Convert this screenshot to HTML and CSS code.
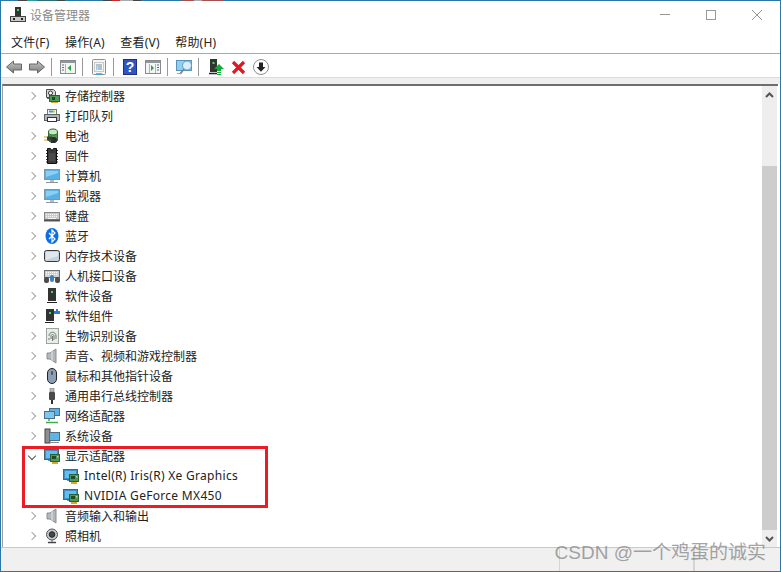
FILE: index.html
```html
<!DOCTYPE html>
<html lang="zh-CN">
<head>
  <meta charset="UTF-8" />
  <title>设备管理器</title>
  <link rel="stylesheet" href="styles.css">
</head>
<body>
  <svg class="defs" width="0" height="0">
    <defs>
      <linearGradient id="steel" x1="0" y1="0" x2="0" y2="1">
        <stop offset="0" stop-color="#c4c4c4"/>
        <stop offset="1" stop-color="#7d7d7d"/>
      </linearGradient>
      <symbol id="chip" viewBox="0 0 16 16">
        <rect x="6.500" y="6.500" width="9" height="7" fill="#4c9a58" stroke="#2b5f35"/>
        <rect x="8" y="8" width="4" height="3" fill="#20492a"/>
        <rect x="13" y="8" width="1.500" height="1.500" fill="#a7d8ae"/>
        <path d="M8 15h6" stroke="#e0a52c" stroke-width="2"/>
      </symbol>
      <symbol id="screen" viewBox="0 0 16 16">
        <rect x=".5" y="1.500" width="14" height="10" fill="#3d8fc6" stroke="#52636f"/>
        <rect x="2" y="3" width="11" height="7" fill="#63bdf0"/>
        <path d="M4 12.500h4" stroke="#7e8c96"/>
      </symbol>
      <symbol id="i-storage" viewBox="0 0 16 16">
        <path d="M2.500 1.500h7l2 2v6h-9z" fill="#d8d8d8" stroke="#4f4f4f"/>
        <circle cx="6.500" cy="5" r="2" fill="#fff" stroke="#333"/>
        <path d="M3 10.500h5" stroke="#666"/>
        <rect x="5.500" y="7.500" width="10" height="6" fill="#4c9a58" stroke="#2b5f35"/>
        <rect x="8" y="9" width="3" height="3" fill="#20492a"/>
        <path d="M7 14.500h7" stroke="#e0a52c"/>
      </symbol>
      <symbol id="i-printer" viewBox="0 0 16 16">
        <rect x="3.500" y="1.500" width="9" height="5" fill="#f4f4f4" stroke="#777"/>
        <path d="M5 3.500h2" stroke="#2f9ee0" stroke-width="2"/>
        <path d="M7 3.500h2" stroke="#3fb46a" stroke-width="2"/>
        <path d="M9 3.500h2" stroke="#e0c23c" stroke-width="2"/>
        <rect x=".5" y="6.500" width="15" height="6" fill="#aeb4b9" stroke="#5e6266"/>
        <rect x="3.500" y="9.500" width="9" height="4" fill="#fff" stroke="#333"/>
      </symbol>
      <symbol id="i-battery" viewBox="0 0 16 16">
        <path d="M4.500 4v8c0 3 9 3 9 0V4z" fill="#4e9f4a" stroke="#2b6a30"/>
        <ellipse cx="9" cy="4" rx="4.500" ry="3" fill="#c9e7c0" stroke="#2b6a30"/>
        <path d="M6 9h4a3 3 0 0 1 0 6H7" fill="#2d2d2d"/>
        <path d="M3 8.500h5v4H3z" fill="#3a3a3a"/>
        <path d="M0 9h3M0 12h3" stroke="#d8a22b"/>
      </symbol>
      <symbol id="i-firmware" viewBox="0 0 16 16">
        <path d="M3.500 .5h3a1.500 1.500 0 0 0 3 0h3v15h-9z" fill="#3a3a3a" stroke="#111"/>
        <path d="M2 2.500h1M2 5.500h1M2 8.500h1M2 11.500h1M2 14h1M13 2.500h1M13 5.500h1M13 8.500h1M13 11.500h1M13 14h1" stroke="#333"/>
        <path d="M5 5h6v8H5z" fill="#4c4c4c"/>
      </symbol>
      <symbol id="i-monitor" viewBox="0 0 16 16">
        <rect x=".5" y="1.500" width="15" height="10" fill="#58b0e6" stroke="#7d97a8"/>
        <path d="M2 3h12v2L2 9z" fill="#8ad0f5"/>
        <path d="M6 12h4v2H6z" fill="#b4bcc2"/>
        <path d="M2 14.500h12" stroke="#8b959c"/>
      </symbol>
      <symbol id="i-keyboard" viewBox="0 0 16 16">
        <rect x=".5" y="4.500" width="15" height="7" fill="#c9cbcd" stroke="#85888b"/>
        <path d="M2 6.500h12M2 8.500h12" stroke="#f7f7f7" stroke-dasharray="1 1"/>
        <path d="M4 10.500h8" stroke="#f7f7f7"/>
        <path d="M0 12.500h16" stroke="#555" stroke-width="2"/>
      </symbol>
      <symbol id="i-bluetooth" viewBox="0 0 16 16">
        <ellipse cx="8" cy="8" rx="6.500" ry="8" fill="#0a6fe0"/>
        <path d="M5 5l6 6-3 3V2l3 3-6 6" fill="none" stroke="#fff" stroke-width="1.200"/>
      </symbol>
      <symbol id="i-memory" viewBox="0 0 16 16">
        <rect x=".5" y="2.500" width="15" height="11" rx="2" fill="#c3d2dd" stroke="#3a3a3a"/>
        <path d="M2 4h12v4L2 12z" fill="#dfe8ee"/>
      </symbol>
      <symbol id="i-hid" viewBox="0 0 16 16">
        <rect x=".5" y="2.500" width="15" height="7" fill="#cdd0d2" stroke="#6c6f72"/>
        <path d="M2 4.500h12M2 6.500h12" stroke="#fff" stroke-dasharray="1 1"/>
        <rect x="0" y="9" width="5" height="6" rx="2" fill="#4c4c4c"/>
        <rect x="11" y="9" width="5" height="6" rx="2" fill="#4c4c4c"/>
        <rect x="6" y="7" width="4" height="7" rx="2" fill="#3e7fc0"/>
      </symbol>
      <symbol id="i-softdev" viewBox="0 0 16 16">
        <rect x="4" y="0" width="8" height="13" fill="#333"/>
        <rect x="7" y="3" width="2" height="2" fill="#3be04c"/>
        <path d="M3 14.500h10" stroke="#222"/>
      </symbol>
      <symbol id="i-softcomp" viewBox="0 0 16 16">
        <rect x="2" y="1" width="8" height="12" fill="#333"/>
        <rect x="5" y="4" width="2" height="2" fill="#3be04c"/>
        <path d="M1 14.500h9" stroke="#222"/>
        <path d="M10 3h2V1h2v2h2v3h-6z" fill="#2c7fd0"/>
      </symbol>
      <symbol id="i-bio" viewBox="0 0 16 16">
        <rect x="2.500" y=".5" width="12" height="15" fill="#e6eee8" stroke="#9aa5a0"/>
        <path d="M5 8c0-5 7-5 7 0v3M7 11V8c0-2 3-2 3 0v4M8.500 8v5M5 10v2" fill="none" stroke="#777"/>
      </symbol>
      <symbol id="i-sound" viewBox="0 0 16 16">
        <path d="M3 5h3l6-4v14l-6-4H3z" fill="#b4b8bb" stroke="#8a8e91"/>
        <path d="M8 3v10" stroke="#e4e6e8"/>
      </symbol>
      <symbol id="i-mouse" viewBox="0 0 16 16">
        <rect x="3.500" y=".5" width="9" height="15" rx="4.500" fill="#8ba0b5" stroke="#222"/>
        <rect x="7" y="3" width="2" height="4" rx="1" fill="#49586a"/>
      </symbol>
      <symbol id="i-usb" viewBox="0 0 16 16">
        <rect x="6" y="0" width="4" height="4" fill="#bbb" stroke="#666" stroke-width=".5"/>
        <rect x="5" y="4" width="6" height="8" rx="1" fill="#4a4a4a"/>
        <path d="M8 12v4" stroke="#333" stroke-width="2"/>
      </symbol>
      <symbol id="i-net" viewBox="0 0 16 16">
        <rect x="5.500" y=".5" width="10" height="7" fill="#5fb0e2" stroke="#4b6f88"/>
        <rect x=".5" y="3.500" width="10" height="7" fill="#7cc6f0" stroke="#4b6f88"/>
        <path d="M5 11v2M2 14.500h12" stroke="#3fae4a" stroke-width="1.500"/>
      </symbol>
      <symbol id="i-system" viewBox="0 0 16 16">
        <rect x="1" y="1" width="5" height="14" fill="#8d8f91" stroke="#444"/>
        <rect x="5.500" y="4.500" width="10" height="8" fill="#5eb4e6" stroke="#546b7c"/>
        <path d="M7 14.500h8" stroke="#7e8c96"/>
      </symbol>
      <symbol id="i-display" viewBox="0 0 16 16">
        <use href="#screen"/>
        <use href="#chip"/>
      </symbol>
      <symbol id="i-camera" viewBox="0 0 16 16">
        <circle cx="8" cy="6.500" r="5.500" fill="#c6c8ca" stroke="#555"/>
        <circle cx="8" cy="6.500" r="2.800" fill="#3e4a52" stroke="#222"/>
        <path d="M4 14.500h8" stroke="#444" stroke-width="1.500"/>
        <path d="M8 12v2" stroke="#666"/>
      </symbol>
    </defs>
  </svg>

  <div class="window">
    <div class="edge"></div>

    <div class="titlebar">
      <svg class="app-icon" width="16" height="16" viewBox="0 0 16 16">
        <rect x="5" y="0" width="6" height="9" fill="#333"/>
        <rect x="7" y="2" width="2" height="2" fill="#3be04c"/>
        <rect x=".5" y="9.500" width="15" height="5" fill="#c9c9c9" stroke="#444"/>
        <path d="M3 12h2M11 12h2" stroke="#222" stroke-width="2"/>
      </svg>
      <span class="title">设备管理器</span>
      <div class="caption">
        <svg width="12" height="12" viewBox="0 0 12 12"><path d="M1 5.500h10" stroke="#999"/></svg>
        <svg width="12" height="12" viewBox="0 0 12 12"><rect x="1.500" y="1.500" width="9" height="9" fill="none" stroke="#999"/></svg>
        <svg width="12" height="12" viewBox="0 0 12 12"><path d="M1 1l10 10M11 1L1 11" stroke="#999"/></svg>
      </div>
    </div>

    <div class="menubar">
      <span>文件(F)</span>
      <span>操作(A)</span>
      <span>查看(V)</span>
      <span>帮助(H)</span>
    </div>

    <div class="toolbar">
      <svg class="tool" width="16" height="16" viewBox="0 0 16 16"><path d="M7.500 2L.5 8l7 6v-3h8V5h-8z" fill="url(#steel)" stroke="#666"/></svg>
      <svg class="tool next" width="16" height="16" viewBox="0 0 16 16"><path d="M8.500 2l7 6-7 6v-3h-8V5h8z" fill="url(#steel)" stroke="#666"/></svg>
      <i class="sep"></i>
      <svg class="tool" width="16" height="16" viewBox="0 0 16 16"><rect x=".5" y="1.500" width="15" height="13" fill="#f4f4f4" stroke="#8a8a8a"/><path d="M1 3h14" stroke="#8e979e" stroke-width="2"/><path d="M2 6h2M2 8.500h2M2 11h2" stroke="#4d6f92"/><path d="M5.500 5v9" stroke="#a9b4bd"/><path d="M11 6v6L7.500 9z" fill="#23a83f"/></svg>
      <i class="sep"></i>
      <svg class="tool" width="16" height="16" viewBox="0 0 16 16"><rect x="1.500" y=".5" width="13" height="15" rx="1" fill="#f5f5f5" stroke="#8f8f8f"/><rect x="3.500" y="3.500" width="9" height="9" fill="none" stroke="#c9c9c9"/><path d="M5 6h6M6.500 8h4.500M6.500 10h4.500" stroke="#7b8b99"/><path d="M5 8h1M5 10h1" stroke="#3b9fe0"/><path d="M5 15h6" stroke="#2fa6e8" stroke-width="1.500"/></svg>
      <i class="sep"></i>
      <svg class="tool" width="16" height="16" viewBox="0 0 16 16"><rect x="1.500" y=".5" width="13" height="15" fill="#2f55c4" stroke="#1d2f80"/><text x="8" y="13" class="help-mark">?</text></svg>
      <svg class="tool next" width="16" height="16" viewBox="0 0 16 16"><rect x=".5" y="1.500" width="15" height="13" fill="#f4f4f4" stroke="#8a8a8a"/><path d="M1 3h14" stroke="#8e979e" stroke-width="2"/><path d="M12 6h2M12 8.500h2M12 11h2" stroke="#4d6f92"/><path d="M10.500 5v9M4.500 5v9" stroke="#a9b4bd"/><path d="M6 6v6l3-3z" fill="#23a83f"/></svg>
      <i class="sep"></i>
      <svg class="tool" width="17" height="16" viewBox="0 0 17 16"><rect x=".5" y="1.500" width="15" height="10" fill="#8fd0f2" stroke="#5b93b8"/><circle cx="11" cy="6.500" r="4.500" fill="#d9eefa" stroke="#5f9ac0"/><path d="M8 10l-4 5" stroke="#7b8790" stroke-width="2"/><path d="M1 14.500h5" stroke="#9aa6ad"/></svg>
      <i class="sep tight"></i>
      <svg class="tool" width="17" height="16" viewBox="0 0 17 16"><rect x="3" y="0" width="7" height="13" fill="#333"/><rect x="5.500" y="3" width="2" height="2" fill="#3be04c"/><path d="M2 14.500h8" stroke="#222" stroke-width="1.500"/><path d="M12 5l5 5h-3v2h-4v-2H7z" fill="#17a83a"/><path d="M10 13.500h4M10 15.500h4" stroke="#17a83a"/></svg>
      <svg class="tool next" width="15" height="15" viewBox="0 0 15 15"><path d="M2 2l11 11M13 2L2 13" stroke="#e01822" stroke-width="3.200"/></svg>
      <svg class="tool next" width="16" height="16" viewBox="0 0 16 16"><circle cx="8" cy="8" r="7.500" fill="#fff" stroke="#8d8d8d"/><path d="M6 3.500h4V8h2.500L8 12.800 3.500 8H6z" fill="#222"/></svg>
    </div>

    <div class="band"></div>

    <div class="content">
      <div class="tree">
        <div class="row"><i class="arrow"></i><svg class="icon"><use href="#i-storage"/></svg><span>存储控制器</span></div>
        <div class="row"><i class="arrow"></i><svg class="icon"><use href="#i-printer"/></svg><span>打印队列</span></div>
        <div class="row"><i class="arrow"></i><svg class="icon"><use href="#i-battery"/></svg><span>电池</span></div>
        <div class="row"><i class="arrow"></i><svg class="icon"><use href="#i-firmware"/></svg><span>固件</span></div>
        <div class="row"><i class="arrow"></i><svg class="icon"><use href="#i-monitor"/></svg><span>计算机</span></div>
        <div class="row"><i class="arrow"></i><svg class="icon"><use href="#i-monitor"/></svg><span>监视器</span></div>
        <div class="row"><i class="arrow"></i><svg class="icon"><use href="#i-keyboard"/></svg><span>键盘</span></div>
        <div class="row"><i class="arrow"></i><svg class="icon"><use href="#i-bluetooth"/></svg><span>蓝牙</span></div>
        <div class="row"><i class="arrow"></i><svg class="icon"><use href="#i-memory"/></svg><span>内存技术设备</span></div>
        <div class="row"><i class="arrow"></i><svg class="icon"><use href="#i-hid"/></svg><span>人机接口设备</span></div>
        <div class="row"><i class="arrow"></i><svg class="icon"><use href="#i-softdev"/></svg><span>软件设备</span></div>
        <div class="row"><i class="arrow"></i><svg class="icon"><use href="#i-softcomp"/></svg><span>软件组件</span></div>
        <div class="row"><i class="arrow"></i><svg class="icon"><use href="#i-bio"/></svg><span>生物识别设备</span></div>
        <div class="row"><i class="arrow"></i><svg class="icon"><use href="#i-sound"/></svg><span>声音、视频和游戏控制器</span></div>
        <div class="row"><i class="arrow"></i><svg class="icon"><use href="#i-mouse"/></svg><span>鼠标和其他指针设备</span></div>
        <div class="row"><i class="arrow"></i><svg class="icon"><use href="#i-usb"/></svg><span>通用串行总线控制器</span></div>
        <div class="row"><i class="arrow"></i><svg class="icon"><use href="#i-net"/></svg><span>网络适配器</span></div>
        <div class="row"><i class="arrow"></i><svg class="icon"><use href="#i-system"/></svg><span>系统设备</span></div>
        <div class="group">
          <div class="row"><i class="arrow open"></i><svg class="icon"><use href="#i-display"/></svg><span>显示适配器</span></div>
          <div class="row child"><svg class="icon"><use href="#i-display"/></svg><span>Intel(R) Iris(R) Xe Graphics</span></div>
          <div class="row child"><svg class="icon"><use href="#i-display"/></svg><span>NVIDIA GeForce MX450</span></div>
          <div class="mark"></div>
        </div>
        <div class="row"><i class="arrow"></i><svg class="icon"><use href="#i-sound"/></svg><span>音频输入和输出</span></div>
        <div class="row"><i class="arrow"></i><svg class="icon"><use href="#i-camera"/></svg><span>照相机</span></div>
      </div>
      <div class="scrollbar">
        <svg class="scroll-btn" width="15" height="17" viewBox="0 0 15 17"><path d="M4 11l3.500-3.500L11 11" fill="none" stroke="#555" stroke-width="2"/></svg>
        <div class="thumb"></div>
        <svg class="scroll-btn" width="15" height="17" viewBox="0 0 15 17"><path d="M4 7l3.500 3.500L11 7" fill="none" stroke="#555" stroke-width="2"/></svg>
      </div>
    </div>

    <div class="statusbar">
      <div class="cell wide"></div>
      <div class="cell mid"></div>
      <div class="cell"></div>
    </div>

    <div class="watermark">CSDN @一个鸡蛋的诚实</div>
  </div>
</body>
</html>
```

FILE: styles.css
```css
html, body {
  margin: 0;
  padding: 0;
}
body {
  font-family: "Noto Sans", "Noto Sans CJK SC", sans-serif;
  font-size: 12px;
  color: #222;
  background: #fff;
}
.defs {
  position: absolute;
}
.window {
  position: relative;
  box-sizing: border-box;
  width: 781px;
  height: 572px;
  border: 1px solid #2a78a8;
  display: flex;
  flex-direction: column;
  overflow: hidden;
}
/* bits of the window behind, showing through the top border */
.edge {
  position: fixed;
  left: 0;
  top: 0;
  width: 223px;
  height: 1px;
  background: linear-gradient(to right,
    #2a78a8 18px, #444 18px, #444 27px, #2a9a9e 27px, #2a9a9e 37px,
    #2b6f74 37px, #2b6f74 57px, #444 57px, #444 65px, #2a78a8 65px,
    #2a78a8 103px, #444 103px, #444 112px, #c22c2c 112px, #c22c2c 120px,
    #aaa 120px, #aaa 133px, #444 133px, #444 141px, #2a78a8 141px,
    #2a78a8 181px, #a55050 181px, #a55050 194px, #aaa 194px, #aaa 202px,
    #a55050 202px);
}
.titlebar {
  height: 27px;
  display: flex;
  align-items: center;
  padding-left: 9px;
  flex: none;
}
.app-icon {
  margin-right: 4px;
}
.title {
  color: #8a8a8a;
}
.caption {
  margin-left: auto;
  display: flex;
  gap: 34px;
  padding-right: 17px;
}
.menubar {
  height: 26px;
  flex: none;
  display: flex;
  align-items: center;
  gap: 15.5px;
  padding: 2px 0 0 10px;
  border-bottom: 1px solid #a9a9a9;
  box-sizing: border-box;
  letter-spacing: 0.2px;
}
.toolbar {
  height: 23px;
  flex: none;
  display: flex;
  align-items: center;
  padding: 3px 0 0 5px;
  box-sizing: border-box;
}
.tool {
  flex: none;
}
.tool.next {
  margin-left: 7px;
}
.sep {
  width: 1px;
  height: 18px;
  background: #999;
  margin: 0 8px 0 6px;
}
.sep.tight {
  margin-left: 5px;
}
.help-mark {
  fill: #fff;
  font-size: 14px;
  font-weight: bold;
  text-anchor: middle;
  font-family: "Liberation Sans", sans-serif;
}
.band {
  height: 7px;
  flex: none;
  background: #efefef;
  border-top: 1px solid #dcdcdc;
  box-sizing: border-box;
}
.content {
  flex: 1;
  min-height: 0;
  display: flex;
  margin: 0 2px 0 1px;
  border-top: 2px solid #6e6e6e;
  border-left: 1px solid #a0a0a0;
}
.tree {
  flex: 1;
  background: #fff;
}
.row {
  height: 20px;
  display: flex;
  align-items: center;
  padding: 0 0 1px 26px;
  box-sizing: border-box;
}
.row.child {
  padding-left: 60px;
  letter-spacing: 0.3px;
}
.arrow {
  width: 6px;
  height: 6px;
  border-right: 1.5px solid #a6a6a6;
  border-top: 1.5px solid #a6a6a6;
  transform: rotate(45deg);
  margin-right: 9px;
  box-sizing: border-box;
}
.arrow.open {
  border-color: #555;
  transform: rotate(135deg);
}
.icon {
  width: 16px;
  height: 16px;
  margin-right: 5px;
  flex: none;
}
.group {
  position: relative;
}
.mark {
  position: absolute;
  left: 19px;
  top: 0;
  width: 246px;
  height: 62px;
  border: 3px solid #ed1c24;
  box-sizing: border-box;
  pointer-events: none;
}
.scrollbar {
  width: 15px;
  flex: none;
  margin-right: 1px;
  background: #eee;
  display: flex;
  flex-direction: column;
  justify-content: space-between;
}
.scroll-btn {
  flex: none;
}
.thumb {
  background: #cdcdcd;
  margin-top: 63px;
  flex: 1;
}
.statusbar {
  height: 24px;
  flex: none;
  background: #f0f0f0;
  border-top: 1px solid #c9c9c9;
  box-sizing: border-box;
  display: flex;
}
.cell {
  border-right: 1px solid #d5d5d5;
}
.cell.wide {
  width: 558px;
}
.cell.mid {
  width: 133px;
}
.watermark {
  position: absolute;
  right: 14px;
  bottom: 7px;
  font-size: 19px;
  line-height: 22px;
  color: rgba(125, 125, 125, 0.7);
  font-family: "Liberation Sans", "Noto Sans CJK SC", sans-serif;
}
```
